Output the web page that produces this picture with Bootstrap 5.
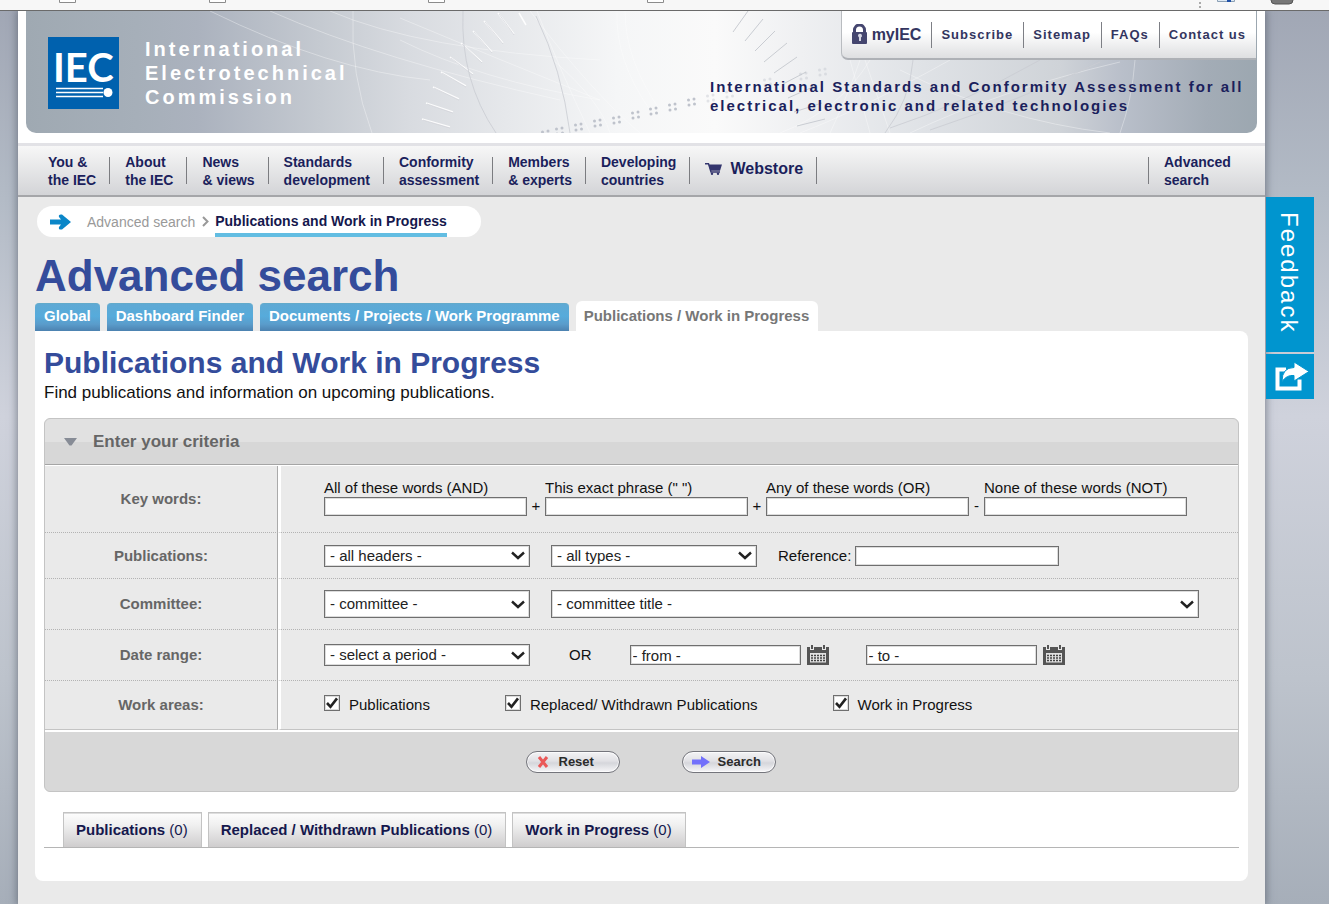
<!DOCTYPE html>
<html lang="en">
<head>
<meta charset="utf-8">
<meta name="viewport" content="width=device-width, initial-scale=1">
<title>IEC - Advanced search</title>
<link rel="stylesheet" href="https://cdn.jsdelivr.net/npm/bootstrap@5.3.0/dist/css/bootstrap.min.css">
<style>
:root{--navy:#1b1f5c;--blue:#344c9b;--line:#b3b3b3}
body{font-family:"Liberation Sans",Arial,sans-serif;font-size:15px;line-height:18px;color:#111;min-height:100vh;
 background:linear-gradient(#a0a6b4 0,#b3bbc6 22%,#cfd2dc 46%,#bdc3cc 75%,#a6aeb9 100%)}
a{text-decoration:none;color:inherit}
.chrome-strip{height:11px;background:#f7f7f7;border-bottom:1px solid #6a6a6a;overflow:hidden;position:relative;z-index:1}
.chrome-strip svg{display:block}
.shell{margin-left:18px;margin-right:64px;background:#eaeaea;min-height:calc(100vh - 11px);box-shadow:0 0 8px 1px rgba(70,78,92,.6)}
.head-area{background:#fff;padding:0 8px 10px;border-bottom:3px solid #e2e2e6}
.masthead{height:122px;border-radius:0 0 10px 10px;overflow:hidden;
 background:linear-gradient(90deg,#9fa9b2 0,#a6afb9 9%,#abb2be 14%,#c5cad1 24%,#d8dbe0 31%,#e6e8eb 39%,#f5f6f7 48%,#fafafa 56%,#eff0f2 63%,#dfe2e6 73%,#cfd3d8 84%,#b9bfca 89%,#a3acb6 96%,#9ca7b0 100%)}
.masthead .art{position:absolute;inset:0;width:100%;height:100%}
.brand{padding:26px 0 0 22px;gap:26px;position:relative}
.brand-name{color:#fff;font-weight:700;font-size:20px;line-height:24px;letter-spacing:3px}
.head-right{position:relative}
.util{background:linear-gradient(#fff 45%,#dedfe1);border-bottom:2px solid #aeb1b6;border-left:1px solid #b9bcc0;border-bottom-left-radius:7px;height:49px;font-weight:700;font-size:13px;letter-spacing:1px;color:#33355f;margin-right:1px}
.util li{padding:0 10px 0 9px;height:26px;display:flex;align-items:center;border-left:1px solid #7d7f85}
.util li:first-child{border-left:0;font-size:16px;letter-spacing:0}
.tagline{width:547px;margin:17px 0 0;font-weight:700;font-size:15px;line-height:19px;letter-spacing:2px;color:var(--navy)}
.mainbar{height:51px;background:linear-gradient(#f7f7f7,#d3d4d7);border-bottom:2px solid #a5a6a9;font-size:14px;font-weight:700;color:var(--navy)}
.mainbar ul{padding-left:30px}
.mainbar li{display:flex;align-items:center}
.mainbar li::after{content:"";width:1px;height:27px;background:#7b7c80;margin:0 15px 0 13px}
.mainbar .store{font-size:16px;gap:8px;padding-bottom:4px}
.mainbar .adv{border-left:1px solid #7b7c80;height:27px;padding-left:15px;width:117px;display:flex;align-items:center}
.page-body{padding:9px 17px 24px}
.crumbs{background:#fff;border-radius:16px;height:31px;width:444px;margin:0 0 0 2px;padding:0 12px;font-size:14px;color:#999}
.crumbs .chev{margin:0 6px 0 7px}
.crumbs .here{color:#15184d;font-weight:700;border-bottom:4px solid #62bde2;height:31px;padding-top:6px}
h1{font-size:44px;line-height:50px;font-weight:700;color:var(--blue);margin:14px 0 0}
h2{font-size:30px;line-height:36px;font-weight:700;color:var(--blue);margin:0}
.top-tabs{gap:7px;font-weight:700}
.top-tabs a{display:block;height:28px;padding:3px 9px 0;color:#fff;border-radius:4px 4px 0 0;border-top:1px solid #62aacb;background:linear-gradient(#5fa9d4,#56abdb 45%,#5a9ccb 75%,#4c82b0)}
.top-tabs a.current{background:#fff;color:#777;height:30px;border:0;padding:6px 9px 0 8px;border-radius:6px 6px 0 0}
.panel{background:#fff;border-radius:0 8px 8px 8px;padding:14px 9px 33px}
.intro{font-size:17px;line-height:22px;margin:0 0 14px;padding-top:1px}
.criteria{border:1px solid #c4c4c4;border-radius:6px;background:#d8d8d8;margin:0}
.criteria-head{height:46px;padding-left:19px;gap:16px;border-bottom:1px solid #a5a5a5;border-radius:6px 6px 0 0;background:linear-gradient(#e1e1e1 50%,#d7d7d7 52%);color:#666;font-weight:700;font-size:17px}
.criteria-body{background:#eaeaea;border-top:1px solid #fff;border-bottom:2px solid #fff}
.crit-row{display:flex}
.crit-row>.cap{flex:0 0 233px;display:flex;align-items:center;justify-content:center;font-weight:700;color:#666;border-right:1px solid #aaa;border-bottom:1px dotted var(--line)}
.crit-row>.fields{flex:1;border-left:3px solid #fff;border-bottom:1px dotted var(--line);padding-left:43px;display:flex;align-items:center;min-width:0}
.crit-row:last-child>*{border-bottom:1px solid #c4c4c4}
.crit-row.h-key>.fields{align-items:flex-end;padding-bottom:16px}
.h-key{height:67px}.h-a{height:46px}.h-b{height:51px}.h-c{height:49px}
.box{border:1px solid #6f6f6f;box-shadow:inset 0 0 0 1px #dcdcdc;background:#fff;border-radius:0;color:#222;font-size:15px;line-height:18px;padding:0 2px;height:20px;width:204px;display:block}
.h-key .box{width:203px;height:19px}
.h-key label{display:block}
.box::placeholder{color:#222;opacity:1}
select.box{appearance:none;height:22px;width:206px;padding:0 24px 0 5px;background:#fff url("data:image/svg+xml,%3Csvg xmlns='http://www.w3.org/2000/svg' width='14' height='9'%3E%3Cpath d='M1 1.5l6 5.5 6-5.5' fill='none' stroke='%23222' stroke-width='2.4'/%3E%3C/svg%3E") no-repeat right 4px center}
select.tall{height:28px}
.box.date-box{width:171px}
.sym{width:18px;text-align:center;line-height:20px}
.sym.minus{width:15px}
.cal{border:0;background:none;padding:0;margin-left:6px;line-height:0}
.tick{appearance:none;width:16px;height:16px;border:1px solid #6f6f6f;margin:0 9px 4px 0;box-shadow:inset 0 0 0 1px #dcdcdc;background:#fff}
.tick:checked{background:#fff url("data:image/svg+xml,%3Csvg xmlns='http://www.w3.org/2000/svg' width='14' height='14'%3E%3Cpath d='M2 7l3.500 3.800L12 2.400' fill='none' stroke='%23222' stroke-width='2.6'/%3E%3C/svg%3E") center no-repeat}
.gap-l{margin-left:21px}
.room-r{padding-right:39px}
.or-word{margin:0 38px 0 39px}
.second{margin-left:37px}
.areas{gap:75px}
.crit-foot{height:59px;gap:62px;padding-left:18px}
.pill{height:22px;width:94px;border:1px solid #74757c;border-radius:11px;background:linear-gradient(#f3f3f5,#e1e1e5 45%,#d5d6db 55%,#f6f6f8);box-shadow:inset 0 0 0 1px rgba(255,255,255,.7);font-weight:700;font-size:13px;line-height:18px;color:#2b2b2b;padding:0 9px;display:flex;align-items:center}
.res-tabs{margin-top:20px;padding-left:19px;gap:6px;border-bottom:1px solid #b5b5b5}
.res-tabs a{display:block;height:35px;padding:8px 13px 0 12px;border:1px solid #c3c3c3;border-bottom:0;box-shadow:inset 0 1px 0 #ddd;background:linear-gradient(#fdfdfd,#f0f0f0 35%,#cfcdce);color:#15184d}
.side-tools{position:fixed;right:15px;top:197px;width:48px}
.side-tools button{display:flex;width:48px;border:0;background:#0095cf;color:#fff;align-items:center;justify-content:center;padding:0}
.side-tools .fb{height:155px;writing-mode:vertical-rl;font-size:24px;line-height:28px;letter-spacing:2px;margin-bottom:2px;padding:0 2px 4px 0}
.side-tools .sh{height:45px;padding-left:4px}
</style>
</head>
<body>
<div class="chrome-strip d-flex justify-content-between">
 <svg width="680" height="10" aria-hidden="true"><path fill="#fff" stroke="#8c8c8c" d="M59.500-2v4.500h16V-2M209.500-2v4.500h16V-2M428.500-2v4.500h16V-2M647.500-2v4.500h16V-2"/></svg>
 <svg width="140" height="10" aria-hidden="true"><path d="M11 2v2M11 6v2" stroke="#aaa" stroke-width="2"/><path d="M28.500-2v3.500h17V-2" fill="#dfeaf4" stroke="#8ba0b5"/><path d="M38 0h4v2h-4z" fill="#1f50a8"/><path d="M82-4h22v4q0 4-4 4H86q-4 0-4-4z" fill="#777" stroke="#555"/></svg>
</div>

<div class="shell">
 <header>
  <div class="head-area">
   <div class="masthead position-relative d-flex justify-content-between">
    <svg class="art" viewBox="26 11 1231 122" preserveAspectRatio="xMidYMid slice" aria-hidden="true">
     <defs>
      <g id="quad"><circle cx="-2.500" cy="-2" r="1.500"/><circle cx="3" cy="-3" r="1.500"/><circle cx="-2" cy="3" r="1.500"/><circle cx="3.500" cy="2" r="1.500"/></g>
     </defs>
     <g fill="none" stroke="#fff" stroke-opacity=".35">
      <path d="M210 11Q330 70 430 80M270 11Q380 60 560 100M353 11Q350 75 372 133M330 11Q420 50 600 60M400 18Q500 60 600 100M400 40Q480 80 600 100M537 11Q560 70 590 133M530 11Q590 90 640 133M617 11Q615 60 650 110M625 11Q625 60 660 110M553 60Q600 100 610 133M780 133Q840 110 870 60M800 133Q860 110 950 60M830 133Q850 90 860 60M870 133L850 60M890 133L865 60M1135 60Q1132 100 1120 133M900 70Q1000 120 1110 133M910 133Q1000 90 1120 62"/>
     </g>
     <g stroke="#fff" stroke-width="1.500" stroke-opacity=".9">
      <path d="M422 119l28 8M426 103l27 9M433 87l26 12M441 72l25 14M450 57l23 17M461 43l21 19M473 31l19 21M484 21l19 22M498 13l16 21M519 13l7 12"/>
     </g>
     <g stroke="#c9ccd2" fill="none">
      <path d="M423 120l27 8M427 104l26 9M434 88l25 12M442 73l24 14M451 58l22 17M462 44l20 19M474 32l18 21M485 22l18 22M499 14l15 21" stroke-opacity=".6"/>
      <path d="M733 32l15-21M745 41l18-22M755 51l20-20M764 62l23-19M774 73l23-16M783 84l23-12M788 98l27-12M794 112l28-9M797 126l28-7"/>
      <path d="M463 11Q460 80 496 133M536 16Q562 70 570 133M913 60Q910 100 885 133M890 128Q960 105 1040 60M930 130Q1020 100 1100 62" stroke-opacity=".8"/>
     </g>
     <g fill="#bfc3cc">
      <use href="#quad" x="545" y="134"/><use href="#quad" x="559" y="131"/><use href="#quad" x="578" y="127"/><use href="#quad" x="597" y="123"/><use href="#quad" x="616" y="120"/><use href="#quad" x="635" y="115"/><use href="#quad" x="653" y="111"/><use href="#quad" x="672" y="107"/><use href="#quad" x="691" y="102"/>
      <g opacity=".4"><use href="#quad" x="710" y="98"/><use href="#quad" x="729" y="94"/><use href="#quad" x="767" y="82"/><use href="#quad" x="803" y="76"/><use href="#quad" x="822" y="72"/></g>
     </g>
    </svg>
    <a href="#" class="brand d-flex align-items-start">
     <svg width="71" height="72" role="img" aria-label="IEC logo"><rect width="71" height="72" fill="#0061ae"/><text x="5" y="45" font-family="Lato,sans-serif" font-weight="700" font-size="40" fill="#fff">IEC</text><path d="M8 51.500h47M8 55.500h47M8 59.500h47" stroke="#fff" stroke-width="1.500"/><circle cx="60" cy="55.500" r="4.500" fill="#fff"/></svg>
     <span class="brand-name">International<br>Electrotechnical<br>Commission</span>
    </a>
    <div class="head-right d-flex flex-column align-items-end">
     <ul class="util list-unstyled d-flex align-items-center mb-0">
      <li><svg class="me-1" width="17" height="21" viewBox="0 0 17 21" aria-hidden="true"><path d="M3.500 10V6a5 5 0 0 1 10 0v4" fill="none" stroke="#45466f" stroke-width="3"/><rect x="1" y="8" width="15" height="12" rx="1" fill="#45466f"/><path d="M7 12a2 2 0 1 1 3 1.500V17H8v-3.500z" fill="#d8d8e4"/></svg><a href="#">myIEC</a></li>
      <li><a href="#">Subscribe</a></li><li><a href="#">Sitemap</a></li><li><a href="#">FAQs</a></li><li><a href="#">Contact us</a></li>
     </ul>
     <p class="tagline">International Standards and Conformity Assessment for all electrical, electronic and related technologies</p>
    </div>
   </div>
  </div>
  <nav class="mainbar d-flex align-items-center justify-content-between" aria-label="Main">
   <ul class="list-unstyled d-flex mb-0">
    <li><a href="#">You &amp;<br>the IEC</a></li>
    <li><a href="#">About<br>the IEC</a></li>
    <li><a href="#">News<br>&amp; views</a></li>
    <li><a href="#">Standards<br>development</a></li>
    <li><a href="#">Conformity<br>assessment</a></li>
    <li><a href="#">Members<br>&amp; experts</a></li>
    <li><a href="#">Developing<br>countries</a></li>
    <li><a href="#" class="store d-flex align-items-center"><svg width="17" height="12" viewBox="0 0 17 12" aria-hidden="true"><path d="M0 .800h3.500L6 9h9" fill="none" stroke="#34366e" stroke-width="1.400"/><path d="M3.500 1.500H17L15 7.800H5.500z" fill="#34366e"/><circle cx="7" cy="10.800" r="1.200" fill="#34366e"/><circle cx="13" cy="10.800" r="1.200" fill="#34366e"/></svg>Webstore</a></li>
   </ul>
   <div class="adv"><a href="#">Advanced<br>search</a></div>
  </nav>
 </header>

 <main class="page-body">
  <nav class="crumbs d-flex align-items-center" aria-label="Breadcrumb">
   <svg width="22" height="16" viewBox="0 0 22 16" aria-hidden="true"><path d="M1 5.500h11L10 3q-1-3 3-2.500L22 8l-9 7.500q-4 .5-3-2.500l2-2.500H1z" fill="#0a86c8"/></svg>
   <a href="#" class="ms-3">Advanced search</a>
   <svg class="chev" width="7" height="11" viewBox="0 0 7 11" aria-hidden="true"><path d="M1 1l4.500 4.500L1 10" fill="none" stroke="#999" stroke-width="2"/></svg>
   <span class="here">Publications and Work in Progress</span>
  </nav>
  <h1>Advanced search</h1>
  <nav class="top-tabs d-flex align-items-end" aria-label="Search type">
   <a href="#">Global</a><a href="#">Dashboard Finder</a><a href="#">Documents / Projects / Work Programme</a><a href="#" class="current" aria-current="page">Publications / Work in Progress</a>
  </nav>
  <section class="panel">
   <h2>Publications and Work in Progress</h2>
   <p class="intro">Find publications and information on upcoming publications.</p>
   <form class="criteria">
    <div class="criteria-head d-flex align-items-center"><svg width="13" height="8" aria-hidden="true"><path d="M0 0h13L7.500 7.500h-2z" fill="#878c96"/></svg>Enter your criteria</div>
    <div class="criteria-body">
     <div class="crit-row h-key"><div class="cap">Key words:</div>
      <div class="fields">
       <div><label for="kAll">All of these words (AND)</label><input class="box" id="kAll" type="text"></div><span class="sym">+</span>
       <div><label for="kPhrase">This exact phrase (" ")</label><input class="box" id="kPhrase" type="text"></div><span class="sym">+</span>
       <div><label for="kAny">Any of these words (OR)</label><input class="box" id="kAny" type="text"></div><span class="sym minus">-</span>
       <div><label for="kNone">None of these words (NOT)</label><input class="box" id="kNone" type="text"></div>
      </div></div>
     <div class="crit-row h-a"><div class="cap">Publications:</div>
      <div class="fields">
       <select class="box" aria-label="Headers"><option>- all headers -</option></select>
       <select class="box gap-l" aria-label="Types"><option>- all types -</option></select>
       <label class="gap-l" for="ref">Reference:</label><input class="box ms-1" id="ref" type="text">
      </div></div>
     <div class="crit-row h-b"><div class="cap">Committee:</div>
      <div class="fields room-r">
       <select class="box tall" aria-label="Committee"><option>- committee -</option></select>
       <select class="box tall gap-l flex-grow-1" aria-label="Committee title"><option>- committee title -</option></select>
      </div></div>
     <div class="crit-row h-b"><div class="cap">Date range:</div>
      <div class="fields">
       <select class="box" aria-label="Period"><option>- select a period -</option></select>
       <span class="or-word">OR</span>
       <input class="box date-box" type="text" placeholder="- from -" aria-label="From date">
       <button class="cal" type="button" aria-label="Pick start date"><svg width="22" height="20" viewBox="0 0 22 20"><path fill="#555" d="M0 2h3v3h4V2h8v3h4V2h3v18H0z"/><path fill="#555" d="M4 0h2v4H4zM16 0h2v4h-2z"/><path fill="#e2e2e2" d="M3 8h16v9.500H3z"/><path d="M4 10.500h14M4 13h14M4 15.500h14" stroke="#444" stroke-width="1.600" stroke-dasharray="2 1"/></svg></button>
       <input class="box date-box second" type="text" placeholder="- to -" aria-label="To date">
       <button class="cal" type="button" aria-label="Pick end date"><svg width="22" height="20" viewBox="0 0 22 20"><path fill="#555" d="M0 2h3v3h4V2h8v3h4V2h3v18H0z"/><path fill="#555" d="M4 0h2v4H4zM16 0h2v4h-2z"/><path fill="#e2e2e2" d="M3 8h16v9.500H3z"/><path d="M4 10.500h14M4 13h14M4 15.500h14" stroke="#444" stroke-width="1.600" stroke-dasharray="2 1"/></svg></button>
      </div></div>
     <div class="crit-row h-c"><div class="cap">Work areas:</div>
      <div class="fields areas">
       <label class="d-flex align-items-center"><input class="tick" type="checkbox" checked>Publications</label>
       <label class="d-flex align-items-center"><input class="tick" type="checkbox" checked>Replaced/ Withdrawn Publications</label>
       <label class="d-flex align-items-center"><input class="tick" type="checkbox" checked>Work in Progress</label>
      </div></div>
    </div>
    <div class="crit-foot d-flex align-items-center justify-content-center">
     <button class="pill" type="reset"><svg class="me-2" width="15" height="12" aria-hidden="true"><path d="M3 1l8 10M11 1L3 11" stroke="#ea5858" stroke-width="3"/></svg>Reset</button>
     <button class="pill" type="button"><svg class="me-2" width="18" height="12" aria-hidden="true"><path d="M0 3.500h9V0l9 6-9 6V8.500H0z" fill="#7270fb"/></svg>Search</button>
    </div>
   </form>
   <nav class="res-tabs d-flex" aria-label="Results">
    <a href="#"><b>Publications</b> (0)</a><a href="#"><b>Replaced / Withdrawn Publications</b> (0)</a><a href="#"><b>Work in Progress</b> (0)</a>
   </nav>
  </section>
 </main>
</div>

<aside class="side-tools">
 <button class="fb" type="button">Feedback</button>
 <button class="sh" type="button" aria-label="Share"><svg width="34" height="30" viewBox="0 0 34 30"><path d="M11 7.500H2.500v19h22v-9" fill="none" stroke="#fff" stroke-width="4"/><path d="M19 0l15 9.500L19 19v-5.500q-7-1-12 6 0-14 12-14z" fill="#fff" stroke="#0095cf"/></svg></button>
</aside>
<script src="https://cdn.jsdelivr.net/npm/bootstrap@5.3.0/dist/js/bootstrap.bundle.min.js"></script>
</body>
</html>
